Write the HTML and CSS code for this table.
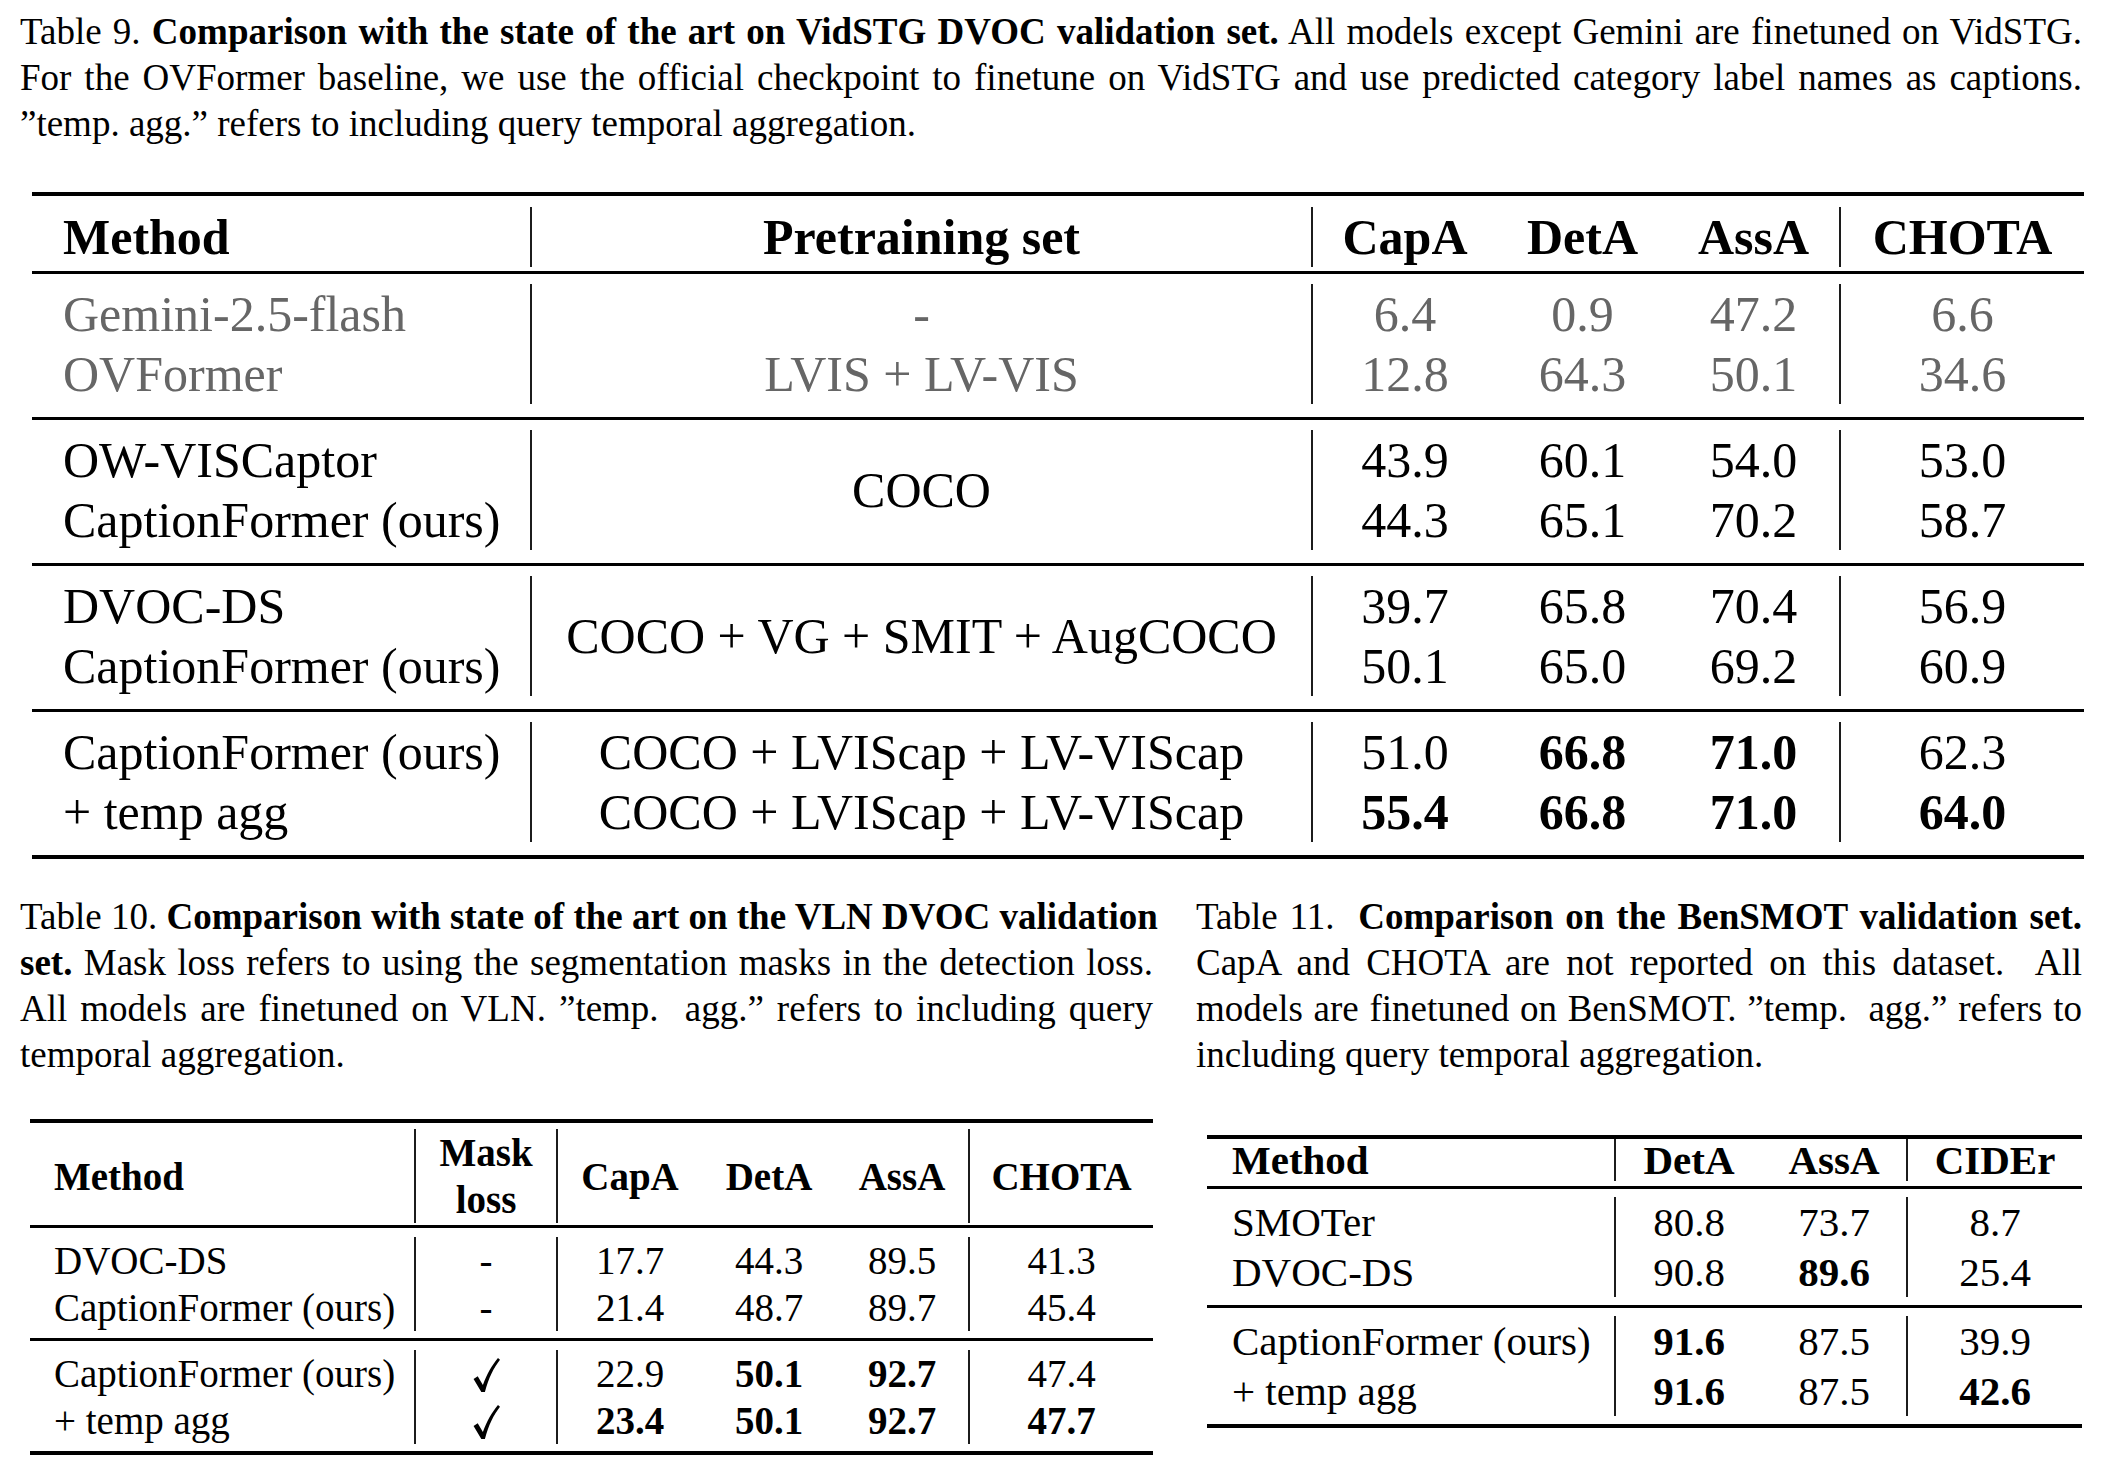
FILE: index.html
```html
<!DOCTYPE html>
<html>
<head>
    <link rel="stylesheet" href="styles.css">
</head>
<body>
    <div class="page">
        <p class="caption wide">
            <span class="ln">Table 9. <b>Comparison with the state of the art on VidSTG DVOC validation set.</b> All models except Gemini are finetuned on VidSTG.</span>
            <span class="ln">For the OVFormer baseline, we use the official checkpoint to finetune on VidSTG and use predicted category label names as captions.</span>
            <span class="ln last">”temp. agg.” refers to including query temporal aggregation.</span>
        </p>

        <table class="res t9">
            <colgroup>
                <col class="w-method"><col class="w-pre"><col class="w-capa"><col class="w-deta"><col class="w-assa"><col class="w-last">
            </colgroup>
            <thead>
                <tr class="sp heavy head-top"><td colspan="6"></td></tr>
                <tr>
                    <th class="l vr">Method</th>
                    <th class="vr">Pretraining set</th>
                    <th>CapA</th>
                    <th>DetA</th>
                    <th class="vr">AssA</th>
                    <th>CHOTA</th>
                </tr>
                <tr class="sp head-bottom"><td colspan="6"></td></tr>
            </thead>
            <tbody>
                <tr class="sp rule grp-top"><td colspan="6"></td></tr>
                <tr class="muted">
                    <td class="l vr">Gemini-2.5-flash</td><td class="vr">-</td>
                    <td>6.4</td><td>0.9</td><td class="vr">47.2</td><td>6.6</td>
                </tr>
                <tr class="muted">
                    <td class="l vr">OVFormer</td><td class="vr">LVIS + LV-VIS</td>
                    <td>12.8</td><td>64.3</td><td class="vr">50.1</td><td>34.6</td>
                </tr>
                <tr class="sp grp-bottom"><td colspan="6"></td></tr>
            </tbody>
            <tbody>
                <tr class="sp rule grp-top"><td colspan="6"></td></tr>
                <tr>
                    <td class="l vr">OW-VISCaptor</td><td class="vr" rowspan="2">COCO</td>
                    <td>43.9</td><td>60.1</td><td class="vr">54.0</td><td>53.0</td>
                </tr>
                <tr>
                    <td class="l vr">CaptionFormer (ours)</td>
                    <td>44.3</td><td>65.1</td><td class="vr">70.2</td><td>58.7</td>
                </tr>
                <tr class="sp grp-bottom"><td colspan="6"></td></tr>
            </tbody>
            <tbody>
                <tr class="sp rule grp-top"><td colspan="6"></td></tr>
                <tr>
                    <td class="l vr">DVOC-DS</td><td class="vr" rowspan="2">COCO + VG + SMIT + AugCOCO</td>
                    <td>39.7</td><td>65.8</td><td class="vr">70.4</td><td>56.9</td>
                </tr>
                <tr>
                    <td class="l vr">CaptionFormer (ours)</td>
                    <td>50.1</td><td>65.0</td><td class="vr">69.2</td><td>60.9</td>
                </tr>
                <tr class="sp grp-bottom"><td colspan="6"></td></tr>
            </tbody>
            <tbody>
                <tr class="sp rule grp-top"><td colspan="6"></td></tr>
                <tr>
                    <td class="l vr">CaptionFormer (ours)</td><td class="vr">COCO + LVIScap + LV-VIScap</td>
                    <td>51.0</td><td><b>66.8</b></td><td class="vr"><b>71.0</b></td><td>62.3</td>
                </tr>
                <tr>
                    <td class="l vr">+ temp agg</td><td class="vr">COCO + LVIScap + LV-VIScap</td>
                    <td><b>55.4</b></td><td><b>66.8</b></td><td class="vr"><b>71.0</b></td><td><b>64.0</b></td>
                </tr>
                <tr class="sp grp-bottom"><td colspan="6"></td></tr>
                <tr class="sp heavy"><td colspan="6"></td></tr>
            </tbody>
        </table>

        <div class="columns">
            <div class="col col-left">
                <p class="caption">
                    <span class="ln">Table 10. <b>Comparison with state of the art on the VLN DVOC validation</b></span>
                    <span class="ln"><b>set.</b> Mask loss refers to using the segmentation masks in the detection loss.</span>
                    <span class="ln">All models are finetuned on VLN. ”temp.&nbsp; agg.” refers to including query</span>
                    <span class="ln last">temporal aggregation.</span>
                </p>

                <table class="res t10">
                    <colgroup>
                        <col class="w-method"><col class="w-mask"><col class="w-capa"><col class="w-deta"><col class="w-assa"><col class="w-last">
                    </colgroup>
                    <thead>
                        <tr class="sp heavy head-top"><td colspan="6"></td></tr>
                        <tr>
                            <th class="l vr">Method</th>
                            <th class="vr">Mask<br>loss</th>
                            <th>CapA</th>
                            <th>DetA</th>
                            <th class="vr">AssA</th>
                            <th>CHOTA</th>
                        </tr>
                        <tr class="sp head-bottom"><td colspan="6"></td></tr>
                    </thead>
                    <tbody>
                        <tr class="sp rule grp-top"><td colspan="6"></td></tr>
                        <tr>
                            <td class="l vr">DVOC-DS</td><td class="vr">-</td>
                            <td>17.7</td><td>44.3</td><td class="vr">89.5</td><td>41.3</td>
                        </tr>
                        <tr>
                            <td class="l vr">CaptionFormer (ours)</td><td class="vr">-</td>
                            <td>21.4</td><td>48.7</td><td class="vr">89.7</td><td>45.4</td>
                        </tr>
                        <tr class="sp grp-bottom"><td colspan="6"></td></tr>
                    </tbody>
                    <tbody>
                        <tr class="sp rule grp-top"><td colspan="6"></td></tr>
                        <tr>
                            <td class="l vr">CaptionFormer (ours)</td>
                            <td class="vr"><svg class="check" viewBox="0 0 24 32"><path d="M0.5 19.5 L4.2 17 L8.8 24.8 C12.2 15 17 7.2 22.2 0.8 L24 2.4 C18.4 9.6 13.8 18.6 10.6 31.2 L7.4 31.2 Z"/></svg></td>
                            <td>22.9</td><td><b>50.1</b></td><td class="vr"><b>92.7</b></td><td>47.4</td>
                        </tr>
                        <tr>
                            <td class="l vr">+ temp agg</td>
                            <td class="vr"><svg class="check" viewBox="0 0 24 32"><path d="M0.5 19.5 L4.2 17 L8.8 24.8 C12.2 15 17 7.2 22.2 0.8 L24 2.4 C18.4 9.6 13.8 18.6 10.6 31.2 L7.4 31.2 Z"/></svg></td>
                            <td><b>23.4</b></td><td><b>50.1</b></td><td class="vr"><b>92.7</b></td><td><b>47.7</b></td>
                        </tr>
                        <tr class="sp grp-bottom"><td colspan="6"></td></tr>
                        <tr class="sp heavy"><td colspan="6"></td></tr>
                    </tbody>
                </table>
            </div>

            <div class="col col-right">
                <p class="caption">
                    <span class="ln">Table 11.&nbsp; <b>Comparison on the BenSMOT validation set.</b></span>
                    <span class="ln">CapA and CHOTA are not reported on this dataset.&nbsp; All</span>
                    <span class="ln">models are finetuned on BenSMOT. ”temp.&nbsp; agg.” refers to</span>
                    <span class="ln last">including query temporal aggregation.</span>
                </p>

                <table class="res t11">
                    <colgroup>
                        <col class="w-method"><col class="w-deta"><col class="w-assa"><col class="w-last">
                    </colgroup>
                    <thead>
                        <tr class="sp heavy head-top"><td colspan="4"></td></tr>
                        <tr class="head-row">
                            <th class="l vr">Method</th>
                            <th>DetA</th>
                            <th class="vr">AssA</th>
                            <th>CIDEr</th>
                        </tr>
                        <tr class="sp head-bottom"><td colspan="4"></td></tr>
                    </thead>
                    <tbody>
                        <tr class="sp rule grp-top"><td colspan="4"></td></tr>
                        <tr>
                            <td class="l vr">SMOTer</td>
                            <td>80.8</td><td class="vr">73.7</td><td>8.7</td>
                        </tr>
                        <tr>
                            <td class="l vr">DVOC-DS</td>
                            <td>90.8</td><td class="vr"><b>89.6</b></td><td>25.4</td>
                        </tr>
                        <tr class="sp grp-bottom"><td colspan="4"></td></tr>
                    </tbody>
                    <tbody>
                        <tr class="sp rule grp-top"><td colspan="4"></td></tr>
                        <tr>
                            <td class="l vr">CaptionFormer (ours)</td>
                            <td><b>91.6</b></td><td class="vr">87.5</td><td>39.9</td>
                        </tr>
                        <tr>
                            <td class="l vr">+ temp agg</td>
                            <td><b>91.6</b></td><td class="vr">87.5</td><td><b>42.6</b></td>
                        </tr>
                        <tr class="sp grp-bottom"><td colspan="4"></td></tr>
                        <tr class="sp heavy"><td colspan="4"></td></tr>
                    </tbody>
                </table>
            </div>
        </div>
    </div>
</body>
</html>
```

FILE: styles.css
```css
body {
    margin: 0;
    background: #fff;
    color: #000;
    font-family: "Liberation Serif", "Times New Roman", serif;
}

.page {
    padding: 9px 0 0 20px;
    width: 2062px;
}

/* captions: every line is justified except the last one */
.caption {
    margin: 0;
    font-size: 37px;
    line-height: 46px;
}

.caption .ln {
    display: block;
    text-align: justify;
    text-align-last: justify;
    white-space: nowrap;
}

.caption .ln.last {
    text-align-last: left;
}

.caption b {
    font-weight: bold;
}

/* result tables */
.res {
    table-layout: fixed;
    border-collapse: separate;
    border-spacing: 0;
}

.res th,
.res td {
    padding: 0;
    text-align: center;
    vertical-align: middle;
    white-space: nowrap;
}

.res th {
    font-weight: bold;
}

.res .l {
    text-align: left;
}

.res .vr {
    border-right: 2px solid #1c1c1c;
}

.res .sp td {
    font-size: 0;
    line-height: 0;
    height: 0;
}

.res .heavy td {
    border-top: 4px solid #000;
}

.res .rule td {
    border-top: 3px solid #000;
}

.res .head-top td { height: var(--head-top); }
.res .head-bottom td { height: var(--head-bottom); }
.res .grp-top td { height: var(--grp-top); }
.res .grp-bottom td { height: var(--grp-bottom); }

.res .muted td {
    color: #666;
}

/* Table 9 */
.t9 {
    width: 2052px;
    margin: 45px 0 0 12px;
    font-size: 50px;
    line-height: 60px;
    --head-top: 11px;
    --head-bottom: 4px;
    --grp-top: 10px;
    --grp-bottom: 13px;
}

.t9 .l { padding-left: 31px; }
.t9 .w-method { width: 500px; }
.t9 .w-pre { width: 781px; }
.t9 .w-capa { width: 184px; }
.t9 .w-deta { width: 171px; }
.t9 .w-assa { width: 173px; }
.t9 .w-last { width: 243px; }

/* two side-by-side tables */
.columns {
    display: flex;
    gap: 43px;
    margin-top: 35px;
}

.col-left {
    width: 1133px;
}

.col-right {
    width: 886px;
}

.t10 {
    width: 1123px;
    margin: 41px 0 0 10px;
    font-size: 39px;
    line-height: 47px;
    --head-top: 6px;
    --head-bottom: 2px;
    --grp-top: 9px;
    --grp-bottom: 7px;
}

.t10 .l { padding-left: 24px; }
.t10 .w-method { width: 386px; }
.t10 .w-mask { width: 142px; }
.t10 .w-capa { width: 144px; }
.t10 .w-deta { width: 134px; }
.t10 .w-assa { width: 134px; }
.t10 .w-last { width: 183px; }

.check {
    display: inline-block;
    width: 27px;
    height: 36px;
    vertical-align: -6px;
    fill: #000;
}

.t11 {
    width: 875px;
    margin: 57px 0 0 11px;
    font-size: 41px;
    line-height: 50px;
    --head-top: 0px;
    --head-bottom: 5px;
    --grp-top: 8px;
    --grp-bottom: 8px;
}

.t11 .head-row th {
    line-height: 42px;
}

.t11 .l { padding-left: 25px; }
.t11 .w-method { width: 409px; }
.t11 .w-deta { width: 146px; }
.t11 .w-assa { width: 146px; }
.t11 .w-last { width: 174px; }
```
